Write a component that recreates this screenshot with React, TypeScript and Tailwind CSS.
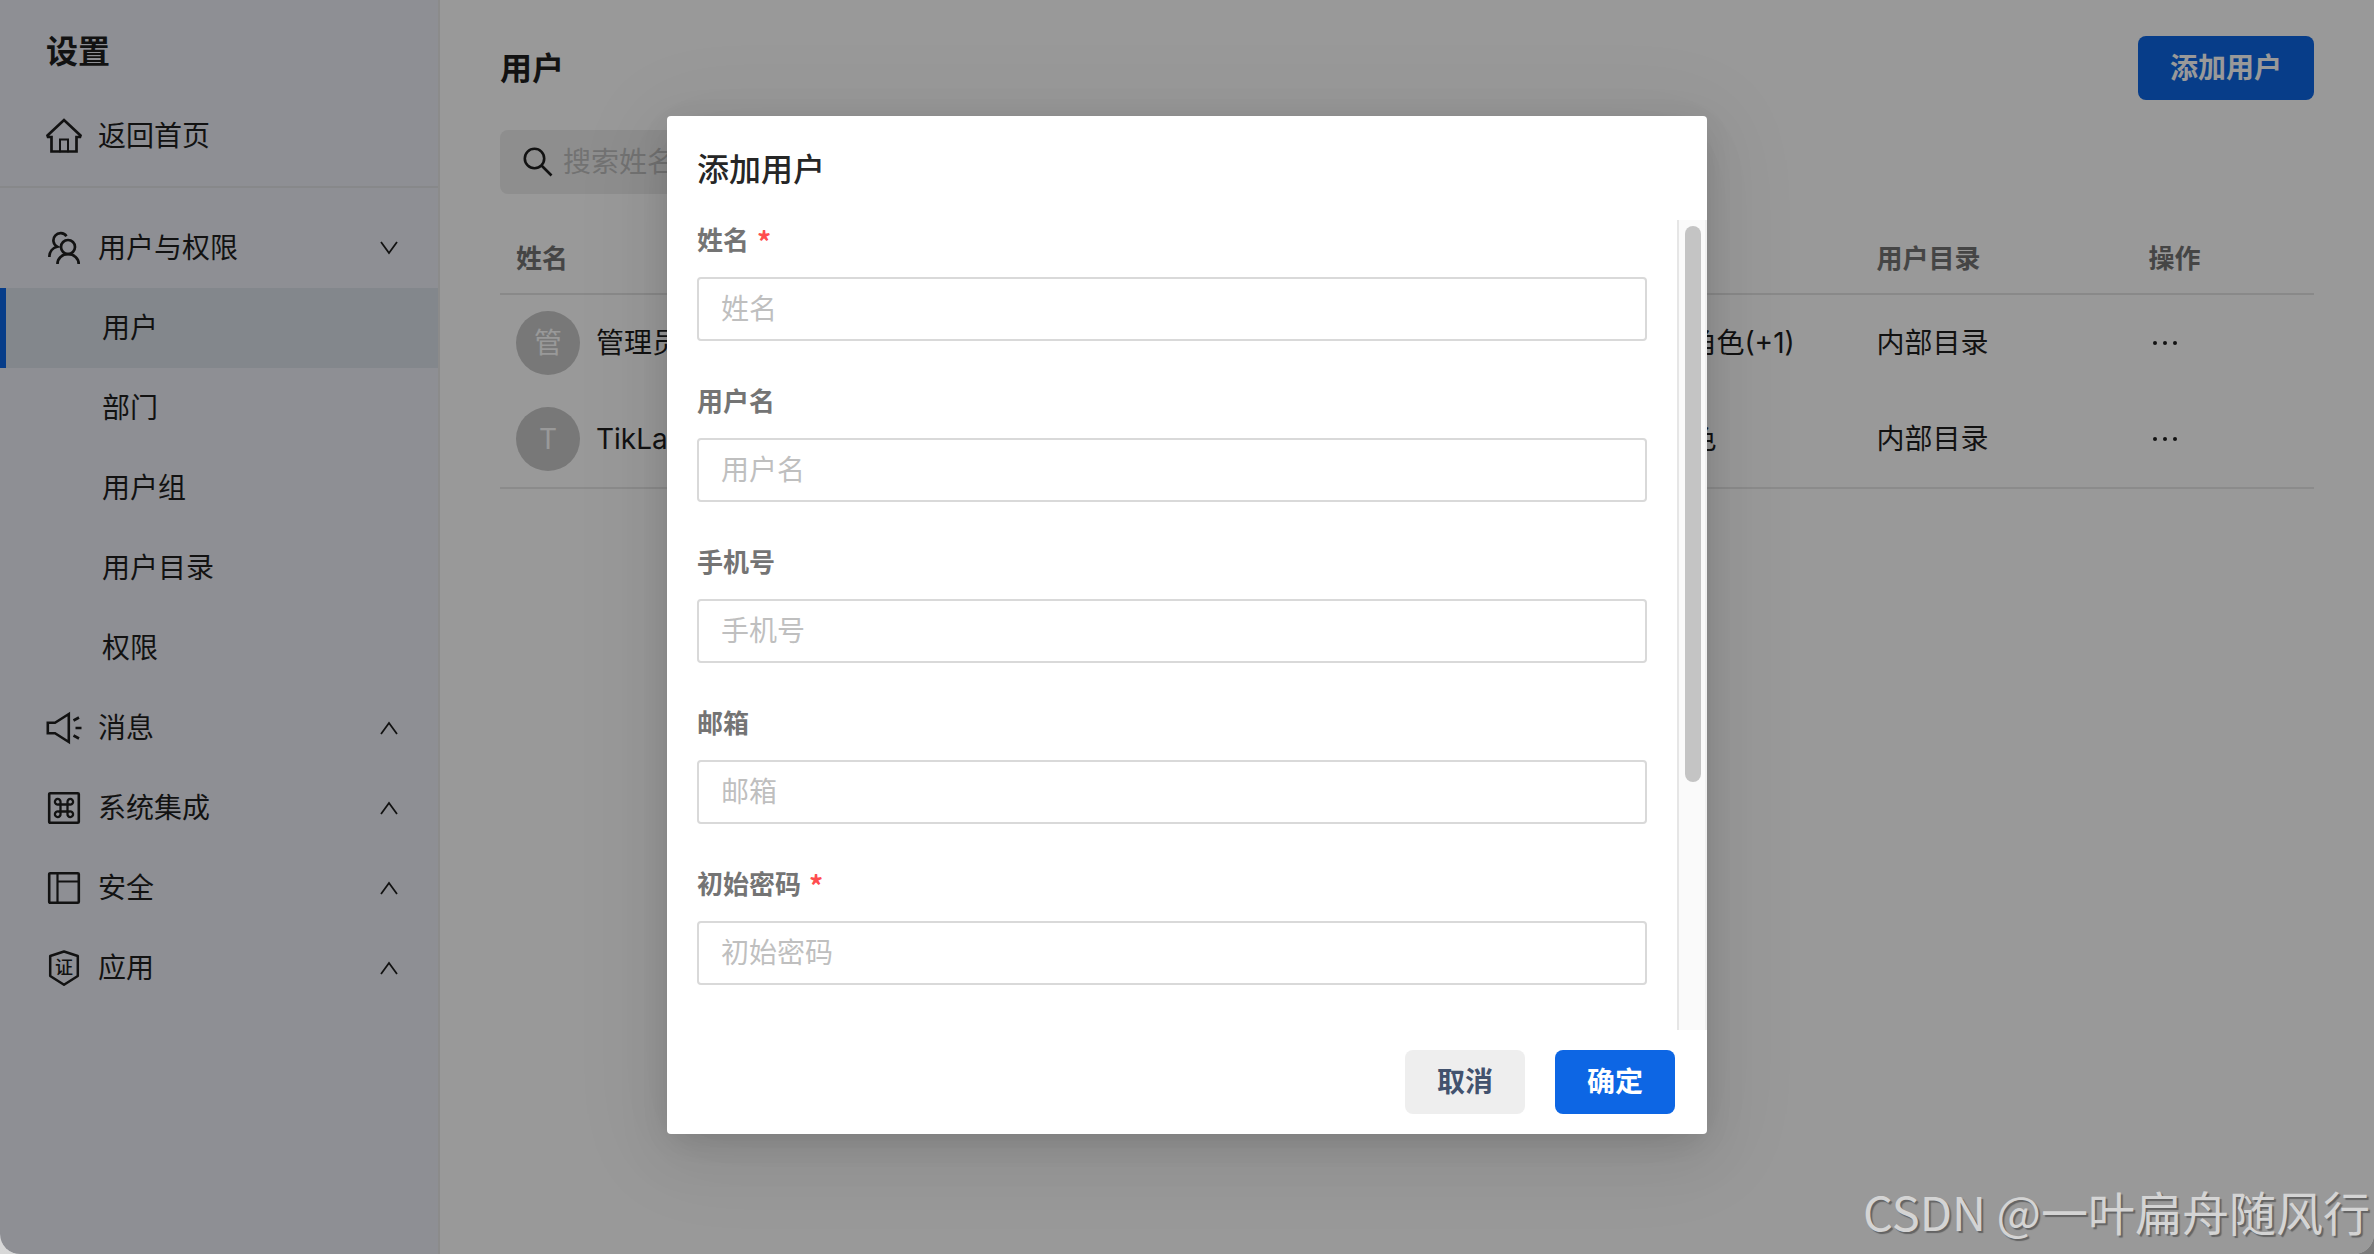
import type { ReactNode } from "react";

const stroke = {
  fill: "none",
  stroke: "currentColor",
  strokeWidth: 2,
} as const;

function HomeIcon() {
  return (
    <svg viewBox="0 0 36 36" className="size-9 shrink-0" {...stroke} strokeWidth={2.7} strokeLinecap="round">
      <path d="M5.500 19H2L1.500 17.500L18 2L34.500 17.500L34 19H30.500V33.500H5.500Z" />
      <path d="M14 33.500V21.500H22V33.500" strokeWidth={2} />
    </svg>
  );
}

function UsersIcon() {
  return (
    <svg viewBox="0 0 36 36" className="size-9 shrink-0" {...stroke} strokeWidth={2.7}>
      <circle cx="22" cy="17" r="7" />
      <path d="M11.500 34C11.500 28.500 16 24.200 22 24.200S32.700 28.500 32.700 34" />
      <path d="M20.500 6.200A7.200 7.200 0 1 0 11.200 16.700C6.500 17.800 3.400 21.800 3.400 27" />
    </svg>
  );
}

function MessageIcon() {
  return (
    <svg viewBox="0 0 36 36" className="size-9 shrink-0" {...stroke} strokeWidth={2.6}>
      <path d="M1.800 12.800H9L22.800 4V32L9 23.200H1.800Z" />
      <path d="M27.500 10.500L33 7.500M29.500 18H35.500M27.500 25.500L33 28.500" />
    </svg>
  );
}

function IntegrationIcon() {
  return (
    <svg viewBox="0 0 36 36" className="size-9 shrink-0" {...stroke} strokeWidth={2.6}>
      <rect x="3.200" y="3.200" width="29.600" height="29.600" rx="1" />
      <path
        strokeWidth={2.3}
        d="M14.500 14.500H21.500V21.500H14.500ZM14.500 14.500H12.300A2.800 2.800 0 1 1 14.500 12ZM21.500 14.500V12A2.800 2.800 0 1 1 23.700 14.500ZM21.500 21.500H23.700A2.800 2.800 0 1 1 21.500 24ZM14.500 21.500V24A2.800 2.800 0 1 1 12.300 21.500Z"
      />
    </svg>
  );
}

function SecurityIcon() {
  return (
    <svg viewBox="0 0 36 36" className="size-9 shrink-0" {...stroke} strokeWidth={2.6}>
      <rect x="3.200" y="3.200" width="29.600" height="29.600" rx="1" />
      <path d="M11.500 3V33M11.500 11.500H33" strokeWidth={2.2} />
    </svg>
  );
}

function AppIcon() {
  return (
    <span className="relative flex size-9 shrink-0 items-center justify-center">
      <svg viewBox="0 0 36 36" className="absolute inset-0 size-9" {...stroke} strokeWidth={2.5} strokeLinejoin="round">
        <path d="M18 1.500L31.800 6V26L18 34.800L4.200 26V6Z" />
      </svg>
      <span className="text-[18px] leading-4 font-medium">证</span>
    </span>
  );
}

function Chevron({ up }: { up: boolean }) {
  return (
    <svg viewBox="0 0 18 14" className="h-3.5 w-[18px]" {...stroke} strokeWidth={1.8}>
      <path d={up ? "M1 13L9 2L17 13" : "M1 1L9 12L17 1"} />
    </svg>
  );
}

function Group({ icon, label, open = false }: { icon: ReactNode; label: string; open?: boolean }) {
  return (
    <button type="button" aria-expanded={open} className="flex h-20 w-full items-center gap-4 pr-10 pl-[46px] text-left">
      {icon}
      <span className="flex-1">{label}</span>
      <Chevron up={!open} />
    </button>
  );
}

const subItems = ["用户", "部门", "用户组", "用户目录", "权限"];

function Sidebar() {
  return (
    <nav className="w-[440px] shrink-0 border-r-2 border-[#e8e8e8] bg-[#edeff7]">
      <h2 className="px-[46px] pt-8 text-[32px] leading-10 font-bold">设置</h2>
      <a href="#home" className="mt-6 flex h-20 items-center gap-4 px-[46px]">
        <HomeIcon />
        返回首页
      </a>
      <div className="mt-2.5 mb-5 h-0.5 bg-[#e2e3e6]" />
      <Group icon={<UsersIcon />} label="用户与权限" open />
      <ul>
        {subItems.map((item, i) => (
          <li key={item}>
            <a
              href="#item"
              className={
                i === 0
                  ? "flex h-20 items-center border-l-6 border-[#0d66e4] bg-[#dbe2e9] pl-24"
                  : "flex h-20 items-center border-l-6 border-transparent pl-24"
              }
            >
              {item}
            </a>
          </li>
        ))}
      </ul>
      <Group icon={<MessageIcon />} label="消息" />
      <Group icon={<IntegrationIcon />} label="系统集成" />
      <Group icon={<SecurityIcon />} label="安全" />
      <Group icon={<AppIcon />} label="应用" />
    </nav>
  );
}

const users = [
  { initial: "管", name: "管理员", role: "管理员角色(+1)", directory: "内部目录" },
  { initial: "T", name: "TikLab", role: "普通角色", directory: "内部目录" },
];

function UsersPage() {
  return (
    <main className="flex-1 px-[60px] pt-9">
      <div className="flex items-center justify-between">
        <h1 className="pt-0.5 text-[32px] leading-10 font-bold">用户</h1>
        <button type="button" className="h-16 w-44 rounded-lg bg-[#0d66e4] font-bold text-white">
          添加用户
        </button>
      </div>
      <label className="mt-[30px] flex h-16 w-[400px] items-center gap-2.5 rounded-lg bg-[#ededed] pl-[23px]">
        <svg viewBox="0 0 30 30" className="size-[30px] shrink-0" {...stroke} strokeWidth={2.6} aria-hidden="true">
          <circle cx="11.500" cy="11.500" r="9.700" />
          <path d="M18.500 18.500L28.500 28.500" />
        </svg>
        <input type="text" aria-label="搜索姓名" placeholder="搜索姓名" className="min-w-0 flex-1 bg-transparent outline-none placeholder:text-[#bfbfbf]" />
      </label>
      <div className="mt-7 border-b-2 border-[#e8e8e8]">
        <table className="w-full table-fixed border-separate border-spacing-0 text-left">
          <thead className="text-[26px] text-[#747474]">
            <tr className="h-[73px]">
              <th className="w-[60%] border-b-2 border-[#e4e4e4] px-4 pt-0.5 font-bold">姓名</th>
              <th className="w-[15%] border-b-2 border-[#e4e4e4] px-4 pt-0.5 font-bold">角色</th>
              <th className="w-[15%] border-b-2 border-[#e4e4e4] px-4 pt-0.5 font-bold">用户目录</th>
              <th className="w-[10%] border-b-2 border-[#e4e4e4] px-4 pt-0.5 font-bold">操作</th>
            </tr>
          </thead>
          <tbody>
            {users.map((user) => (
              <tr key={user.initial} className="h-24">
                <td className="px-4">
                  <div className="flex items-center gap-4">
                    <span className="flex size-16 items-center justify-center rounded-full bg-[#c8c8c8] text-white">{user.initial}</span>
                    {user.name}
                  </div>
                </td>
                <td className="px-4 whitespace-nowrap">{user.role}</td>
                <td className="px-4 whitespace-nowrap">{user.directory}</td>
                <td className="px-4">
                  <button type="button" aria-label="更多操作" className="flex gap-1.5 px-1 py-2">
                    <span className="size-1 rounded-full bg-current" />
                    <span className="size-1 rounded-full bg-current" />
                    <span className="size-1 rounded-full bg-current" />
                  </button>
                </td>
              </tr>
            ))}
          </tbody>
        </table>
      </div>
    </main>
  );
}

const fields = [
  { id: "name", label: "姓名", required: true, type: "text" },
  { id: "username", label: "用户名", required: false, type: "text" },
  { id: "phone", label: "手机号", required: false, type: "tel" },
  { id: "email", label: "邮箱", required: false, type: "email" },
  { id: "password", label: "初始密码", required: true, type: "password" },
];

function AddUserDialog() {
  return (
    <div
      role="dialog"
      aria-modal="true"
      aria-labelledby="dialog-title"
      className="w-[1040px] rounded bg-white shadow-[0_12px_96px_16px_rgba(0,0,0,0.05),0_18px_56px_0_rgba(0,0,0,0.08),0_6px_32px_-8px_rgba(0,0,0,0.14)]"
    >
      <h2 id="dialog-title" className="px-[30px] pt-[34px] pb-[30px] text-[32px] leading-10 font-medium text-[#262626]">
        添加用户
      </h2>
      <div className="flex h-[810px]">
        <form className="flex flex-1 flex-col gap-10 overflow-hidden px-[30px]">
          {fields.map((field) => (
            <div key={field.id}>
              <label htmlFor={field.id} className="flex h-[57px] gap-2 text-[26px] leading-[42px] font-bold text-[#747474]">
                {field.label}
                {field.required && (
                  <span className="font-['Noto_Sans_CJK_SC',sans-serif] text-[28px] text-[#ff4d4f]">*</span>
                )}
              </label>
              <input
                id={field.id}
                type={field.type}
                placeholder={field.label}
                className="block h-16 w-full rounded border-2 border-[#d9d9d9] px-[22px] outline-none placeholder:text-[#bfbfbf]"
              />
            </div>
          ))}
        </form>
        <div className="w-[30px] border-r-2 border-l-2 border-r-[#f0f0f0] border-l-[#e6e6e6] bg-[#fafafa] pt-1.5 pl-1.5">
          <div className="h-[556px] w-4 rounded-full bg-[#c4c4c4]" />
        </div>
      </div>
      <div className="flex justify-end gap-[30px] py-5 pr-8 font-bold">
        <button type="button" className="h-16 w-[120px] rounded-lg bg-[#eeeeee] text-[#42526e]">
          取消
        </button>
        <button type="button" className="h-16 w-[120px] rounded-lg bg-[#0d66e4] text-white">
          确定
        </button>
      </div>
    </div>
  );
}

export default function App() {
  return (
    <div className="relative min-h-screen bg-linear-to-r from-[#d8d8d8] to-[#7a7a7a] font-['Inter','Noto_Sans_CJK_SC',sans-serif] text-[28px] leading-10 text-[#1f1f1f]">
      <div className="flex min-h-screen overflow-hidden rounded-b-[20px] bg-white">
        <Sidebar />
        <UsersPage />
      </div>
      <div className="absolute inset-0 flex items-start justify-center rounded-b-[20px] bg-black/40 pt-[116px]">
        <AddUserDialog />
      </div>
      <div className="absolute right-1 bottom-3 font-['Noto_Sans_CJK_SC',sans-serif] text-[47px] leading-[62px] text-[#d4d4d4] [text-shadow:2px_2px_1px_rgba(0,0,0,0.35)]">
        CSDN @一叶扁舟随风行
      </div>
    </div>
  );
}
